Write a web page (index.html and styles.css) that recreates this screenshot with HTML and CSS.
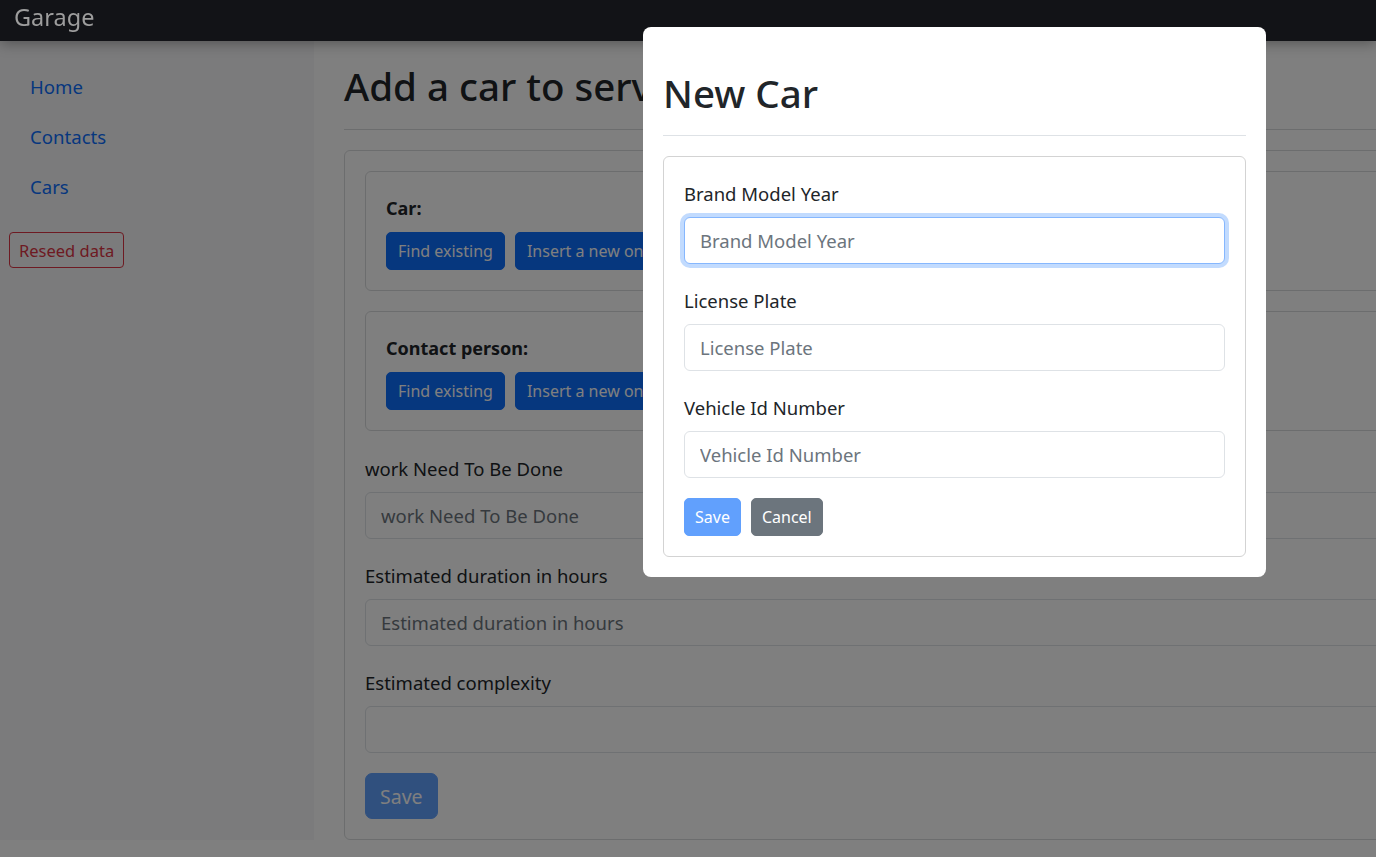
FILE: index.html
```html
<!DOCTYPE html>
<html lang="en">
<head>
<meta charset="utf-8">
<title>Garage</title>
<link rel="stylesheet" href="styles.css">
</head>
<body>
<header class="navbar">
  <a class="brand" href="#">Garage</a>
</header>
<div class="layout">
  <aside class="sidebar">
    <nav class="side-nav">
      <a class="side-link" href="#">Home</a>
      <a class="side-link" href="#">Contacts</a>
      <a class="side-link" href="#">Cars</a>
    </nav>
    <button class="btn btn-outline-danger" type="button">Reseed data</button>
  </aside>
  <main class="content">
    <h1 class="page-title">Add a car to service</h1>
    <hr class="rule">
    <form class="panel">
      <div class="subpanel">
        <div class="subpanel-title">Car:</div>
        <div class="btn-row">
          <button class="btn btn-primary" type="button">Find existing</button>
          <button class="btn btn-primary" type="button">Insert a new one</button>
        </div>
      </div>
      <div class="subpanel">
        <div class="subpanel-title">Contact person:</div>
        <div class="btn-row">
          <button class="btn btn-primary" type="button">Find existing</button>
          <button class="btn btn-primary" type="button">Insert a new one</button>
        </div>
      </div>
      <div class="field">
        <label class="field-label">work Need To Be Done</label>
        <input class="input" type="text" placeholder="work Need To Be Done">
      </div>
      <div class="field">
        <label class="field-label">Estimated duration in hours</label>
        <input class="input" type="text" placeholder="Estimated duration in hours">
      </div>
      <div class="field">
        <label class="field-label">Estimated complexity</label>
        <input class="input" type="text">
      </div>
      <button class="btn btn-lg btn-primary is-disabled" type="button">Save</button>
    </form>
  </main>
</div>
<div class="backdrop"></div>
<div class="modal">
  <h1 class="modal-title">New Car</h1>
  <hr class="modal-rule">
  <form class="modal-card">
    <div class="field">
      <label class="field-label">Brand Model Year</label>
      <input class="input input-focus" type="text" placeholder="Brand Model Year">
    </div>
    <div class="field">
      <label class="field-label">License Plate</label>
      <input class="input" type="text" placeholder="License Plate">
    </div>
    <div class="field">
      <label class="field-label">Vehicle Id Number</label>
      <input class="input" type="text" placeholder="Vehicle Id Number">
    </div>
    <div class="modal-actions">
      <button class="btn btn-sm-primary is-disabled" type="button">Save</button>
      <button class="btn btn-secondary" type="button">Cancel</button>
    </div>
  </form>
</div>
</body>
</html>
```
FILE: styles.css
```css
html, body {
  margin: 0;
  overflow: hidden;
  height: 100%;
}
body {
  font-family: "Noto Sans", "Open Sans", sans-serif;
  color: #212529;
  background: #ffffff;
  font-size: 18px;
}
* { box-sizing: border-box; }

.navbar {
  position: relative;
  z-index: 2;
  height: 41px;
  background: #121317;
  padding: 0 14px;
  box-shadow: 0 2px 14px rgba(0, 0, 0, 0.35);
}
.brand {
  display: block;
  font-size: 23.5px;
  line-height: 34px;
  color: #9d9d9d;
  text-decoration: none;
}

.layout {
  display: flex;
  align-items: stretch;
}
.sidebar {
  flex: none;
  width: 314px;
  background: #f6f7f8;
  padding: 21px 9px 0;
}
.side-nav {
  display: flex;
  flex-direction: column;
  margin-bottom: 20px;
}
.side-link {
  display: block;
  padding: 10px 21px;
  line-height: 30px;
  font-size: 18.6px;
  color: #0d6efd;
  text-decoration: none;
}

.btn {
  font-family: inherit;
  border: 1px solid transparent;
  border-radius: 5px;
  cursor: pointer;
  white-space: nowrap;
}
.btn-outline-danger {
  display: block;
  height: 36px;
  padding: 0 9px;
  font-size: 16.5px;
  background: transparent;
  border-color: #dc3545;
  color: #dc3545;
  border-radius: 4px;
}
.btn-primary {
  height: 38px;
  padding: 0 11px;
  font-size: 16px;
  background: #0d6efd;
  border-color: #0d6efd;
  color: #ffffff;
}
.btn-lg {
  height: 46px;
  padding: 0 14px;
  font-size: 19.5px;
  border-radius: 7px;
}
.is-disabled {
  opacity: 0.65;
}

.content {
  flex: none;
  width: 1240px;
  padding: 21px 0 0 30px;
}
.page-title {
  margin: 0;
  font-size: 38.5px;
  line-height: 48px;
  font-weight: 500;
}
.rule {
  margin: 19px 0 20px;
  border: 0;
  border-top: 1px solid #d9dbdd;
}
.panel {
  border: 1px solid #d9dbdd;
  border-radius: 6px;
  padding: 20px 20px 20px;
}
.subpanel {
  border: 1px solid #d9dbdd;
  border-radius: 6px;
  padding: 20px;
  margin-bottom: 20px;
}
.subpanel + .subpanel {
  margin-bottom: 21px;
}
.subpanel-title {
  font-weight: 700;
  font-size: 18px;
  line-height: 27px;
  padding-top: 3px;
  margin-bottom: 10px;
}
.btn-row {
  display: flex;
  gap: 10px;
}

.field {
  margin-bottom: 20px;
}
.field-label {
  display: block;
  font-size: 18.5px;
  line-height: 27px;
  padding-top: 3px;
  margin-bottom: 10px;
}
.input {
  display: block;
  width: 100%;
  height: 47px;
  padding: 0 15px;
  font-family: inherit;
  font-size: 18.5px;
  color: #212529;
  background: #ffffff;
  border: 1px solid #dee2e6;
  border-radius: 6px;
  outline: none;
}
.input::placeholder {
  color: #6c757d;
}
.input-focus {
  border-color: #86b7fe;
  box-shadow: 0 0 0 4px rgba(13, 110, 253, 0.25);
}

.backdrop {
  position: fixed;
  inset: 0;
  z-index: 1;
  background: rgba(0, 0, 0, 0.5);
}

.modal {
  position: fixed;
  z-index: 3;
  top: 27px;
  left: 643px;
  width: 623px;
  background: #ffffff;
  border-radius: 8px;
  padding: 20px;
}
.modal-title {
  margin: 22px 0 0;
  font-size: 38.5px;
  line-height: 48px;
  font-weight: 500;
}
.modal-rule {
  margin: 18px 0 20px;
  border: 0;
  border-top: 1px solid #dee2e6;
}
.modal-card {
  border: 1px solid #d3d3d3;
  border-radius: 6px;
  padding: 20px;
}
.modal-actions {
  display: flex;
  gap: 10px;
}
.btn-sm-primary {
  height: 38px;
  padding: 0 10px;
  font-size: 16px;
  background: #0d6efd;
  border-color: #0d6efd;
  color: #ffffff;
}
.btn-secondary {
  height: 38px;
  padding: 0 10px;
  font-size: 16px;
  background: #6c757d;
  border-color: #6c757d;
  color: #ffffff;
}
```
